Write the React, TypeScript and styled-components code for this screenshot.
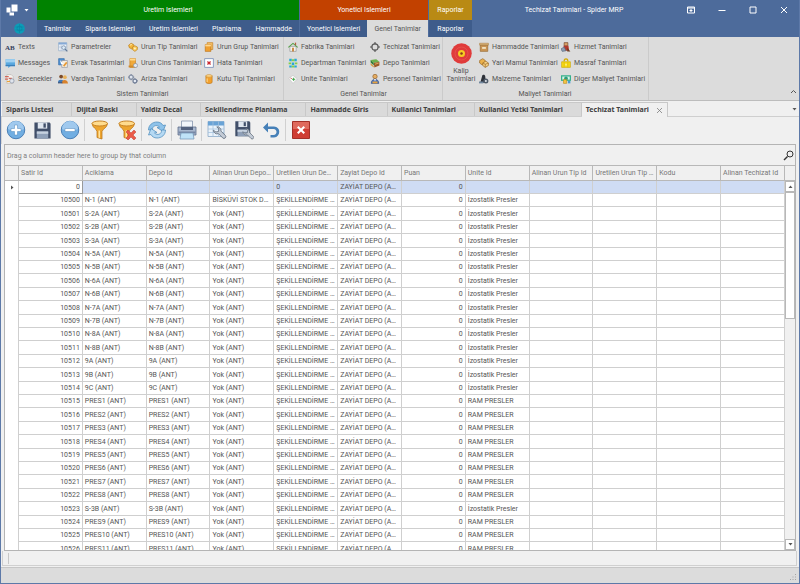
import React from "react";
import styled, { createGlobalStyle, css } from "styled-components";

const GlobalStyle = createGlobalStyle`
  html, body, #root { height: 100%; }
  body { margin: 0; overflow: hidden; }
  *, *::before, *::after { box-sizing: border-box; }
  body, button, input, table { font-family: Roboto, "Liberation Sans", sans-serif; font-size: 7px; line-height: 10px; color: #555; }
  button { border: 0; background: none; padding: 0; margin: 0; cursor: pointer; }
  svg { display: block; flex: none; }
`;

/* ---------- Window frame ---------- */
const Window = styled.div`
  height: 100vh;
  display: flex;
  flex-direction: column;
  background: #f0f0f0;
  border: 1px solid #5d79a8;
  border-top: 0;
`;
const TitleBar = styled.header`
  display: flex;
  height: 37px;
  flex: none;
  background: #4d6b9b;
  color: #fff;
`;
const AppCorner = styled.div`
  width: 36px;
  display: flex;
  flex-direction: column;
`;
const QuickAccess = styled.div`
  height: 20px;
  display: flex;
  align-items: center;
  gap: 6px;
  padding-left: 5px;
`;
const AppButton = styled.button`
  height: 17px;
  display: flex;
  align-items: center;
  justify-content: center;
`;
const Context = styled.div<{ $w: number }>`
  width: ${(p) => p.$w}px;
  flex: none;
  display: flex;
  flex-direction: column;
  margin-right: 1px;
`;
const ContextTitle = styled.div<{ $color: string }>`
  height: 20px;
  line-height: 20px;
  text-align: center;
  background: ${(p) => p.$color};
`;
const ContextTabs = styled.nav`
  display: flex;
  height: 17px;
  background: #3e5c8b;
`;
const RibbonTab = styled.button<{ $active?: boolean }>`
  flex: 1 0 auto;
  padding: 0 6px;
  color: ${(p) => (p.$active ? "#555" : "#fff")};
  background: ${(p) => (p.$active ? "#dcdcdc" : "transparent")};
`;
const WindowTitle = styled.div`
  flex: 1;
  height: 20px;
  line-height: 20px;
  text-align: center;
  white-space: nowrap;
`;
const WindowButton = styled.button`
  width: 31px;
  height: 20px;
  display: flex;
  align-items: center;
  justify-content: center;
`;

/* ---------- Ribbon ---------- */
const Ribbon = styled.section`
  display: flex;
  flex: none;
  height: 64px;
  background: #dcdcdc;
  border-bottom: 1px solid #bdbdbd;
`;
const Group = styled.div<{ $left?: number }>`
  display: flex;
  flex-direction: column;
  padding: 2px 3px 0 ${(p) => p.$left ?? 4}px;
  border-right: 1px solid #cbcbcb;
`;
const GroupBody = styled.div`
  display: flex;
`;
const Commands = styled.div<{ $cols: string }>`
  display: grid;
  grid-template-columns: ${(p) => p.$cols};
  grid-template-rows: repeat(3, 16px);
  grid-auto-flow: column;
`;
const Command = styled.button`
  display: flex;
  align-items: center;
  gap: 3px;
  white-space: nowrap;
  text-align: left;
`;
const BigCommand = styled.button`
  width: 32px;
  margin-right: 2px;
  display: flex;
  flex-direction: column;
  align-items: center;
  padding-top: 4px;
  line-height: 8px;
  gap: 3px;
`;
const Caption = styled.div`
  text-align: center;
  line-height: 14px;
`;
const RibbonEnd = styled.div`
  flex: 1;
  display: flex;
  align-items: flex-end;
  justify-content: flex-end;
  padding: 0 2px 5px 0;
`;

/* ---------- Document tabs ---------- */
const DocTabs = styled.nav`
  display: flex;
  flex: none;
  height: 16px;
  padding: 1px 0 0 1px;
  align-items: stretch;
  border-bottom: 1px solid #cfcfcf;
`;
const DocTab = styled.button<{ $active?: boolean }>`
  flex: none;
  display: flex;
  align-items: center;
  gap: 7px;
  padding: 0 18px 0 4px;
  font-family: "Noto Sans", "Open Sans", sans-serif;
  font-weight: 700;
  color: #404040;
  background: #dadada;
  border: 1px solid #c8c8c8;
  border-width: 1px 1px 0 0;
  ${(p) => p.$active && css`
    background: #f0f0f0;
    padding-right: 4px;
    margin-bottom: -1px;
  `}
`;
const TabListButton = styled.button`
  margin-left: auto;
  width: 10px;
  display: flex;
  align-items: center;
  justify-content: center;
`;

/* ---------- Toolbar ---------- */
const Toolbar = styled.div`
  display: flex;
  flex: none;
  align-items: center;
  height: 27px;
  margin-right: 2px;
  padding-bottom: 1px;
  border-left: 1px solid #d6d6d6;
`;
const ToolButton = styled.button`
  width: 27px;
  height: 24px;
  display: flex;
  align-items: center;
  justify-content: center;
`;
const ToolSeparator = styled.span`
  width: 1px;
  height: 22px;
  margin: 0 1px;
  background: #d0d0d0;
`;

/* ---------- Data grid ---------- */
const GridFrame = styled.main`
  flex: 1;
  min-height: 0;
  margin: 0 3px;
  display: flex;
  flex-direction: column;
  border: 1px solid #b4b4b4;
`;
const GroupPanel = styled.div`
  height: 20px;
  flex: none;
  display: flex;
  align-items: center;
  justify-content: space-between;
  padding: 1px 1px 0 2px;
  color: #808080;
`;
const GridView = styled.div`
  flex: 1;
  min-height: 0;
  display: flex;
`;
const TableClip = styled.div`
  flex: 1;
  min-width: 0;
  overflow: hidden;
  background: #fff;
`;
const Table = styled.table`
  width: 100%;
  table-layout: fixed;
  border-collapse: separate;
  border-spacing: 0;
  line-height: 12px;
`;
const IndicatorCol = styled.col`
  width: 14px;
`;
const HeadCell = styled.th`
  height: 16px;
  padding: 0 2px;
  font-weight: 400;
  text-align: left;
  color: #777;
  background: #f0f0f0;
  border: 1px solid #b8b8b8;
  border-width: 1px 1px 1px 0;
  overflow: hidden;
  white-space: nowrap;
  text-overflow: ellipsis;
`;
const Cell = styled.td<{ $right?: boolean }>`
  padding: 0 2px;
  text-align: ${(p) => (p.$right ? "right" : "left")};
  border: 1px solid #cfcfcf;
  border-width: 0 1px 1px 0;
  overflow: hidden;
  white-space: nowrap;
  text-overflow: ellipsis;
`;
const Row = styled.tr<{ $selected?: boolean }>`
  height: 13px;
  background: ${(p) => (p.$selected ? "#cfdcf4" : "#fff")};
  &:nth-child(5n + 3), &:nth-child(5n) { height: 14px; }
`;
const EditCell = styled(Cell)`
  background: #fff;
  border-color: #999;
`;
const CellInput = styled.input`
  display: block;
  width: 100%;
  height: 12px;
  padding: 0;
  border: 0;
  outline: 0;
  background: transparent;
  text-align: right;
`;
const Indicator = styled.td`
  padding: 0 0 0 5px;
  background: #fff;
  border-right: 1px solid #cfcfcf;
`;
const ScrollColumn = styled.div`
  width: 10px;
  flex: none;
  display: flex;
  flex-direction: column;
  background: #f0f0f0;
`;
const ScrollHead = styled.div`
  height: 16px;
  border: 1px solid #b8b8b8;
  border-width: 1px 0;
`;
const ScrollButton = styled.button`
  height: 11px;
  display: flex;
  align-items: center;
  justify-content: center;
  background: #fff;
  border: 1px solid #b8b8b8;
`;
const ScrollThumb = styled.div`
  flex: 0 0 33%;
  background: #fff;
  border: 1px solid #b8b8b8;
`;
const Spacer = styled.div`
  flex: 1;
`;

/* ---------- Bottom bars ---------- */
const BottomPanel = styled.div`
  flex: none;
  height: 15px;
  margin: 0 2px 0 1px;
  padding: 2px 5px;
  border: 1px solid #d0d0d0;
  border-top: 0;
`;
const BottomMark = styled.div`
  width: 1px;
  height: 11px;
  background: #c8c8c8;
`;
const StatusBar = styled.footer`
  flex: none;
  height: 16px;
  margin-top: 1px;
  display: flex;
  align-items: flex-end;
  justify-content: flex-end;
  padding: 0 2px 2px;
  background: #dcdcdc;
  border-top: 1px solid #c6c6c6;
`;

/* ---------- Icons ---------- */
const S = ({ children, size = 10, box = 16 }: { children: React.ReactNode; size?: number; box?: number }) => (
  <svg width={size} height={size} viewBox={`0 0 ${box} ${box}`} fill="none" aria-hidden="true">
    {children}
  </svg>
);
const Caret = ({ color = "#555", up = false }: { color?: string; up?: boolean }) => (
  <svg width="5" height="3" viewBox="0 0 10 6" aria-hidden="true">
    <path d={up ? "M1 6L5 1L9 6Z" : "M1 0L5 5L9 0Z"} fill={color} />
  </svg>
);
const AbIcon = () => (
  <svg width="10" height="10" viewBox="0 0 10 10" aria-hidden="true">
    <text x="0" y="8" fontFamily="Liberation Serif, serif" fontWeight="700" fontSize="7" fill="#34405c">AB</text>
  </svg>
);
const Wrench = ({ x = 0, y = 0, s = 1 }: { x?: number; y?: number; s?: number }) => (
  <g transform={`translate(${x} ${y}) scale(${s})`}>
    <path d="M1 5a4.500 4.500 0 0 0 6 4l5 5a2 2 0 0 0 3-3l-5-5a4.500 4.500 0 0 0-5-5l2.500 2.500-.5 3-3 .5z" fill="#c3cbd6" stroke="#66717f" strokeWidth="1" />
  </g>
);
const icons = {
  messages: <S><path d="M1 2h15v11H9l-4 3v-3H1z" fill="#5aa9e0" /><path d="M1 2h15v5H1z" fill="#9fd0f2" /><path d="M1 11h15v2H1z" fill="#3b7fb9" /></S>,
  options: <S><path d="M3 1h7l3 3v11H3z" fill="#f7f3f0" stroke="#b9b3b0" /><path d="M0 4h6M0 8h5M6 7h5" stroke="#d3685a" strokeWidth="2" /><circle cx="11" cy="11" r="3.5" fill="#dfe4ec" stroke="#7f8ca0" /><path d="M3 12h5" stroke="#e9a23a" strokeWidth="2" /></S>,
  params: <S><path d="M1 1h13v13H1z" fill="#eef3fa" stroke="#8fa6c4" /><path d="M1 1h13v3H1z" fill="#85a9d6" /><path d="M1 8h13M5 4v10" stroke="#a9bcd4" /><circle cx="9" cy="9" r="3" fill="#dcebf8" stroke="#5f7796" /><path d="M11 11l4 4" stroke="#5f7796" strokeWidth="2" /></S>,
  doc: <S><path d="M1 1h9v10H1z" fill="#4f8fd0" stroke="#2f6aa8" /><path d="M6 4h9v11H6z" fill="#f5eee0" stroke="#8a8f9a" /><path d="M3 3l6 6-4 1z" fill="#fff" /><path d="M8 12l5-6 2 2-5 6z" fill="#e79a35" /></S>,
  shift: <S><circle cx="5" cy="4" r="3" fill="#7b4b2a" /><path d="M0 13c0-5 9-5 10 0z" fill="#3f79b8" /><circle cx="11" cy="5" r="3" fill="#e9b25c" /><path d="M6 15c0-7 9-7 10 0z" fill="#d9822b" /><path d="M0 13h7v2H0z" fill="#344f78" /></S>,
  coins: <S><path d="M1 5l4-3 4 2 1 4-4 3-4-2z" fill="#f3b73c" stroke="#b87a18" /><path d="M7 8l4-2 4 2v4l-4 3-4-3z" fill="#f8c95a" stroke="#b87a18" /><path d="M3 5l3-1" stroke="#fff1c0" strokeWidth="1.5" /><circle cx="11" cy="10.500" r="1.600" fill="#fff1c0" /></S>,
  kind: <S><path d="M3 1h9v14H3z" fill="#f0a93a" stroke="#c47c1d" /><path d="M3 1h9v3H3z" fill="#ffd98c" /><circle cx="12" cy="12" r="3.300" fill="#e3e8ef" stroke="#7d8798" /><path d="M1 12h7v3H1z" fill="#d08a2a" /></S>,
  gears: <S><circle cx="5" cy="5" r="3.200" stroke="#8b96a8" strokeWidth="2" fill="#dfe5ee" /><circle cx="11" cy="11" r="3" stroke="#75829a" strokeWidth="2" fill="#e6ebf4" /><path d="M5 0v2M5 8v2M0 5h2M8 5h2M11 6.500v2M11 14v2M14 11h2" stroke="#75829a" strokeWidth="1.500" /></S>,
  group: <S><path d="M5 1h9v11H5z" fill="#f6c066" stroke="#c47c1d" /><path d="M2 4h9v11H2z" fill="#f0a030" stroke="#b96f14" /><path d="M2 4h9v3H2z" fill="#ffd890" /></S>,
  error: <S><path d="M1 1h14v14H1z" fill="#fff" stroke="#8499bd" strokeWidth="1.500" /><path d="M5.500 5.500l5 5M10.500 5.500l-5 5" stroke="#c9252d" strokeWidth="2" /></S>,
  can: <S><path d="M3 3v10c0 3 10 3 10 0V3z" fill="#f2a02c" stroke="#b9731a" /><ellipse cx="8" cy="3" rx="5" ry="2" fill="#ffd98c" stroke="#c98b30" /><path d="M5 7v6" stroke="#ffdf9c" strokeWidth="1.500" /></S>,
  house: <S><path d="M3 7h10v8H3z" fill="#f4f1ea" stroke="#8b8f94" /><path d="M0 8l8-7 8 7-1 1-7-6-7 6z" fill="#54a046" /><path d="M11 1h2v4h-2z" fill="#b55c3d" /><path d="M6.500 9h3v6h-3z" fill="#c78540" /></S>,
  dept: <S><path d="M2 1h4v4H2zM10 1h4v4h-4zM6 7h4v4H6zM2 12h4v3H2zM10 12h4v3h-4z" fill="#25a9d8" /><path d="M6 2h4v3H6zM1 7h4v3H1zM11 7h4v3h-4zM6 12h4v3H6z" fill="#83cf4a" /></S>,
  unit: <S><path d="M1 7l7-5 7 6-7 7z" fill="#fafafa" stroke="#c2c2c2" /><path d="M9 6v5M6.500 8.500h5" stroke="#3da345" strokeWidth="1.500" /><path d="M4 6l2 2" stroke="#c64a43" strokeWidth="1.500" /></S>,
  target: <S><circle cx="8" cy="8" r="5" stroke="#555" strokeWidth="1.800" /><path d="M8 0v4M8 12v4M0 8h4M12 8h4" stroke="#555" strokeWidth="1.800" /></S>,
  depot: <S><path d="M1 3l9-1 5 4-9 2z" fill="#6bb14a" /><path d="M1 3l5 5v4L1 7z" fill="#2f7b35" /><path d="M6 8l9-2v6l-8 3z" fill="#9a5a28" /><path d="M1 8l5 5v2l-5-4z" fill="#d69a38" /><path d="M8 10l6-2" stroke="#e4b05d" strokeWidth="1.500" /></S>,
  person: <S><circle cx="8" cy="4" r="3.500" fill="#e5ad62" stroke="#8a5a24" /><path d="M2 15c0-9 12-9 12 0z" fill="#4f74b8" stroke="#2c4a80" /><path d="M4 12h8v3H4z" fill="#e7a23c" /><path d="M6.500 8h3l-1.500 4z" fill="#fff" /></S>,
  crate: <S><path d="M1 2h14v3H1z" fill="#e8c38a" stroke="#a87d43" /><path d="M2 5h12v10H2z" fill="#c99555" stroke="#93672f" /><path d="M5 8h6v3H5z" fill="#f2e2c2" /></S>,
  semi: <S><path d="M1 4l5-3 4 3v5L5 11 1 8z" fill="#eab04a" stroke="#94611c" /><path d="M6 8l5-3 4 3v4l-5 3-4-3z" fill="#f6d083" stroke="#94611c" /><path d="M6 8l4 2 5-2M10 10v5" stroke="#94611c" /></S>,
  material: <S><path d="M2 14L5 3c1-3 5-2 5 1l1 10z" fill="#2d3138" /><circle cx="11" cy="11" r="4" fill="#4f5a68" /><circle cx="11" cy="11" r="1.600" fill="#e1e6ec" /><path d="M0 12h7v3H0z" fill="#71879e" /></S>,
  service: <S><path d="M5 1h6v5H5z" fill="#d9a066" stroke="#6b3c22" /><path d="M4 6h8l1 8H5z" fill="#b3372c" /><path d="M0 11l5-3 3 6-6 1z" fill="#8f9fb4" stroke="#59677a" /><path d="M10 9l5 6h-5z" fill="#6b3c22" /></S>,
  bag: <S><path d="M5 5c0-5 6-5 6 0" stroke="#d4aa00" strokeWidth="2" /><path d="M1 6h14v9H1z" fill="#f9d915" stroke="#c8a500" /><path d="M5 6v9M11 6v9" stroke="#d9b800" /><path d="M7 9h2v3H7z" fill="#fff7b0" /></S>,
  money: <S><path d="M0 2h16v9H0z" fill="#35b08b" /><path d="M2 4h12v5H2z" fill="#d9f3e7" /><circle cx="8" cy="7" r="3" fill="#2c9e7c" /><path d="M4 9h5v6H4z" fill="#f3c542" stroke="#bf8c1d" /><path d="M11 11h4v4h-4z" fill="#4a9bd4" /></S>,
};
const Disc = () => (
  <svg width="21" height="21" viewBox="0 0 42 42" aria-hidden="true">
    <circle cx="21" cy="21" r="20.500" fill="#e03b3b" />
    <circle cx="21" cy="21" r="13" fill="none" stroke="#e6504b" strokeWidth="2" />
    <circle cx="21" cy="21" r="7" fill="#f5cf23" />
    <circle cx="21" cy="21" r="2.500" fill="#8b3a1c" />
  </svg>
);

const Ball = ({ minus = false }: { minus?: boolean }) => (
  <S size={20} box={40}>
    <circle cx="20" cy="20" r="17.500" fill="#71aee2" stroke="#4a7fb5" strokeWidth="2" />
    <path d="M4 18a16 16 0 0 1 32 0c-9 4-23 4-32 0z" fill="#a0c9ee" />
    <path d={minus ? "M10 17h20v6H10z" : "M17 10h6v7h7v6h-7v7h-6v-7h-7v-6h7z"} fill="#fff" stroke="#4f86bb" strokeWidth="1" />
  </S>
);
const floppy = (
  <>
    <path d="M3 3h32l2 3v31H3z" fill="#414f69" />
    <path d="M10 3h20v13H10z" fill="#dfe6ef" />
    <path d="M22 5h5v9h-5z" fill="#414f69" />
    <path d="M8 22h24v15H8z" fill="#8fa0b8" />
    <path d="M8 22h24v5H8z" fill="#c6d1df" />
  </>
);
const funnel = (
  <>
    <path d="M4 7c1 9 9 10 10 16v12l10 3V23c2-6 10-7 11-16z" fill="#eda52f" stroke="#b8741a" strokeWidth="1.500" />
    <path d="M17 21v14l3 1V21z" fill="#ffe3a0" />
    <ellipse cx="19.500" cy="7" rx="15.500" ry="5" fill="#ffdc8e" stroke="#c98526" strokeWidth="2" />
  </>
);
const tools: Array<{ label: string; icon: React.ReactNode } | null> = [
  { label: "Yeni", icon: <Ball /> },
  { label: "Kaydet", icon: <S size={19} box={40}>{floppy}</S> },
  { label: "Sil", icon: <Ball minus /> },
  null,
  { label: "Filtrele", icon: <S size={20} box={40}>{funnel}</S> },
  { label: "Filtreyi kaldir", icon: <S size={20} box={40}>{funnel}<path d="M18 24l4-4 6 6 6-6 4 4-6 6 6 6-4 4-6-6-6 6-4-4 6-6z" fill="#ea5a48" stroke="#c2392b" /></S> },
  null,
  {
    label: "Yenile",
    icon: (
      <S size={20} box={40}>
        <path d="M3 20C3 10 11 4 20 4c6 0 10 3 12 7l5-1-5 13-12-8 5-1c-6-6-15-2-14 6z" fill="#8fc3ea" stroke="#4f8dbd" strokeWidth="1.500" />
        <path d="M37 20c0 10-8 16-17 16-6 0-10-3-12-7l-5 1 5-13 12 8-5 1c6 6 15 2 14-6z" fill="#b5d9f3" stroke="#4f8dbd" strokeWidth="1.500" />
      </S>
    ),
  },
  null,
  {
    label: "Yazdir",
    icon: (
      <S size={20} box={40}>
        <path d="M9 2h22v14H9z" fill="#f1f5fa" stroke="#7f8fa8" strokeWidth="1.500" />
        <path d="M2 14h36v16H2z" fill="#a8b7ce" stroke="#5a6a86" strokeWidth="1.500" />
        <path d="M8 14h24v6H8z" fill="#53627f" />
        <path d="M3 23h34v4H3z" fill="#7686a4" />
        <path d="M8 26h24l2 12H6z" fill="#bfe2f7" stroke="#7695b5" strokeWidth="1.500" />
      </S>
    ),
  },
  null,
  {
    label: "Tablo ayarlari",
    icon: (
      <S size={20} box={40}>
        <path d="M2 3h32v30H2z" fill="#eaf3fb" stroke="#86a5c6" strokeWidth="1.500" />
        <path d="M2 3h32v8H2z" fill="#69a3d6" />
        <path d="M2 18h32M2 25h32M12 3v30M23 3v30" stroke="#a3c0dc" strokeWidth="1.500" />
        <Wrench x={11} y={12} s={1.7} />
      </S>
    ),
  },
  { label: "Duzeni kaydet", icon: <S size={20} box={40}><g transform="scale(.88)">{floppy}</g><Wrench x={16} y={16} s={1.5} /></S> },
  { label: "Geri al", icon: <S size={20} box={40}><path d="M14 5L4 15l10 10v-7h11c8 0 8 12 0 12h-6v5h7c14-1 14-22 0-22H14z" fill="#4680b8" /></S> },
  null,
  {
    label: "Kapat",
    icon: (
      <S size={18} box={36}>
        <path d="M1 1h34v34H1z" fill="#cf3d33" stroke="#a33028" strokeWidth="2" />
        <path d="M2 2h32v14H2z" fill="#df6a5d" />
        <path d="M10 13l3-3 5 5 5-5 3 3-5 5 5 5-3 3-5-5-5 5-3-3 5-5z" fill="#fff" />
      </S>
    ),
  },
];

/* ---------- Data ---------- */
type Item = [string, React.ReactNode];
const systemItems: Item[] = [
  ["Texts", <AbIcon />], ["Messages", icons.messages], ["Secenekler", icons.options],
  ["Parametreler", icons.params], ["Evrak Tasarimlari", icons.doc], ["Vardiya Tanimlari", icons.shift],
  ["Urun Tip Tanimlari", icons.coins], ["Urun Cins Tanimlari", icons.kind], ["Ariza Tanimlari", icons.gears],
  ["Urun Grup Tanimlari", icons.group], ["Hata Tanimlari", icons.error], ["Kutu Tipi Tanimlari", icons.can],
];
const generalItems: Item[] = [
  ["Fabrika Tanimlari", icons.house], ["Departman Tanimlari", icons.dept], ["Unite Tanimlari", icons.unit],
  ["Techizat Tanimlari", icons.target], ["Depo Tanimlari", icons.depot], ["Personel Tanimlari", icons.person],
];
const costItems: Item[] = [
  ["Hammadde Tanimlari", icons.crate], ["Yari Mamul Tanimlari", icons.semi], ["Malzeme Tanimlari", icons.material],
  ["Hizmet Tanimlari", icons.service], ["Masraf Tanimlari", icons.bag], ["Diger Maliyet Tanimlari", icons.money],
];
const docTabs = ["Siparis Listesi", "Dijital Baski", "Yaldiz Decal", "Sekillendirme Planlama", "Hammadde Giris", "Kullanici Tanimlari", "Kullanici Yetki Tanimlari"];
const columns = ["Satir Id", "Aciklama", "Depo Id", "Alinan Urun Depo Id", "Uretilen Urun Depo Id", "Zayiat Depo Id", "Puan", "Unite Id", "Alinan Urun Tip Id", "Uretilen Urun Tip Id", "Kodu", "Alinan Techizat Id"];
const names = ["N-1", "S-2A", "S-2B", "S-3A", "N-5A", "N-5B", "N-6A", "N-6B", "N-7A", "N-7B", "N-8A", "N-8B", "9A", "9B", "9C", "PRES1", "PRES2", "PRES3", "PRES4", "PRES5", "PRES6", "PRES7", "PRES8", "S-3B", "PRES9", "PRES10", "PRES11"];
const rows = names.map((name, i) => [
  String(10500 + i),
  `${name} (ANT)`,
  `${name} (ANT)`,
  i === 0 ? "BİSKÜVİ STOK DEPO" : "Yok (ANT)",
  "ŞEKİLLENDİRME DEPO",
  "ZAYİAT DEPO (ANT)",
  "0",
  name.startsWith("PRES") ? "RAM PRESLER" : "İzostatik Presler",
  "", "", "", "",
]);
const isNumeric = (col: number) => col === 0 || col === 6;

const CommandList = ({ items, cols }: { items: Item[]; cols: string }) => (
  <Commands $cols={cols}>
    {items.map(([label, icon]) => (
      <Command key={label}>{icon}{label}</Command>
    ))}
  </Commands>
);

export default function App() {
  return (
    <>
      <GlobalStyle />
      <Window>
        <TitleBar>
          <AppCorner>
            <QuickAccess>
              <S size={12} box={24}>
                <path d="M11 1h12v14H11z" fill="#fff" />
                <path d="M1 7h8v10H1z" fill="#fff" />
                <path d="M7 17h9v6H7z" fill="#fff" />
              </S>
              <Caret color="#fff" />
            </QuickAccess>
            <AppButton aria-label="Uygulama menusu">
              <S size={11} box={22}>
                <circle cx="11" cy="11" r="10.500" fill="#0b9db8" />
                <path d="M3 8h16M3 14h16M11 2v18" stroke="#0b7f9e" strokeWidth="1" />
                <circle cx="11" cy="11" r="5" stroke="#0b7f9e" strokeWidth="1" />
              </S>
            </AppButton>
          </AppCorner>
          <Context $w={262}>
            <ContextTitle $color="#008200">Uretim Islemleri</ContextTitle>
            <ContextTabs>
              {["Tanimlar", "Siparis Islemleri", "Uretim Islemleri", "Planlama", "Hammadde"].map((t) => (
                <RibbonTab key={t}>{t}</RibbonTab>
              ))}
            </ContextTabs>
          </Context>
          <Context $w={128}>
            <ContextTitle $color="#c24100">Yonetici Islemleri</ContextTitle>
            <ContextTabs>
              <RibbonTab>Yonetici Islemleri</RibbonTab>
              <RibbonTab $active>Genel Tanimlar</RibbonTab>
            </ContextTabs>
          </Context>
          <Context $w={43}>
            <ContextTitle $color="#b98a14">Raporlar</ContextTitle>
            <ContextTabs>
              <RibbonTab>Raporlar</RibbonTab>
            </ContextTabs>
          </Context>
          <WindowTitle>Techizat Tanimlari - Spider MRP</WindowTitle>
          <WindowButton aria-label="Serit gorunumu">
            <S size={8}><path d="M1 2h14v12H1z" stroke="#fff" strokeWidth="2" /><path d="M1 4h14M8 6v6M5 9h6" stroke="#fff" strokeWidth="2" /></S>
          </WindowButton>
          <WindowButton aria-label="Simge durumuna kucult">
            <S size={8}><path d="M1 9h14" stroke="#fff" strokeWidth="2" /></S>
          </WindowButton>
          <WindowButton aria-label="Ekrani kapla">
            <S size={8}><path d="M2 2h12v12H2z" stroke="#fff" strokeWidth="2" /></S>
          </WindowButton>
          <WindowButton aria-label="Pencereyi kapat">
            <S size={8}><path d="M2 2l12 12M14 2L2 14" stroke="#fff" strokeWidth="2" /></S>
          </WindowButton>
        </TitleBar>

        <Ribbon>
          <Group>
            <GroupBody>
              <CommandList items={systemItems} cols="53px 70px 76px 76px" />
            </GroupBody>
            <Caption>Sistem Tanimlari</Caption>
          </Group>
          <Group>
            <GroupBody>
              <CommandList items={generalItems} cols="82px 69px" />
            </GroupBody>
            <Caption>Genel Tanimlar</Caption>
          </Group>
          <Group $left={2}>
            <GroupBody>
              <BigCommand><Disc /><span>Kalip Tanimlari</span></BigCommand>
              <CommandList items={costItems} cols="82px 84px" />
            </GroupBody>
            <Caption>Maliyet Tanimlari</Caption>
          </Group>
          <RibbonEnd>
            <button aria-label="Seridi daralt">
              <S size={7} box={14}><path d="M2 10l5-5 5 5" stroke="#555" strokeWidth="2" /></S>
            </button>
          </RibbonEnd>
        </Ribbon>

        <DocTabs>
          {docTabs.map((t) => <DocTab key={t}>{t}</DocTab>)}
          <DocTab $active>
            Techizat Tanimlari
            <S size={7} box={14}><path d="M2 2l10 10M12 2L2 12" stroke="#777" strokeWidth="1.500" /></S>
          </DocTab>
          <TabListButton aria-label="Acik sekmeler"><Caret /></TabListButton>
        </DocTabs>

        <Toolbar role="toolbar">
          {tools.map((t, i) =>
            t ? <ToolButton key={i} aria-label={t.label}>{t.icon}</ToolButton> : <ToolSeparator key={i} />
          )}
        </Toolbar>

        <GridFrame>
          <GroupPanel>
            Drag a column header here to group by that column
            <button aria-label="Ara">
              <S size={11} box={22}><circle cx="14" cy="8" r="6" stroke="#333" strokeWidth="2" /><path d="M9 13l-7 7" stroke="#333" strokeWidth="3" /></S>
            </button>
          </GroupPanel>
          <GridView>
            <TableClip>
              <Table>
                <colgroup>
                  <IndicatorCol />
                  {columns.map((c) => <col key={c} />)}
                </colgroup>
                <thead>
                  <tr>
                    <HeadCell aria-label="Satir isareti" />
                    {columns.map((c) => <HeadCell key={c} scope="col">{c}</HeadCell>)}
                  </tr>
                </thead>
                <tbody>
                  <Row $selected>
                    <Indicator><S size={5} box={10}><path d="M2 1l5 4-5 4z" fill="#555" /></S></Indicator>
                    <EditCell><CellInput aria-label="Satir Id" defaultValue="0" /></EditCell>
                    {["", "", "", "0", "ZAYİAT DEPO (ANT)", "0", "", "", "", "", ""].map((v, i) => (
                      <Cell key={i} $right={i === 5}>{v}</Cell>
                    ))}
                  </Row>
                  {rows.map((r) => (
                    <Row key={r[0]}>
                      <Indicator />
                      {r.map((v, i) => <Cell key={i} $right={isNumeric(i)}>{v}</Cell>)}
                    </Row>
                  ))}
                </tbody>
              </Table>
            </TableClip>
            <ScrollColumn>
              <ScrollHead />
              <ScrollButton aria-label="Yukari kaydir"><Caret up /></ScrollButton>
              <ScrollThumb />
              <Spacer />
              <ScrollButton aria-label="Asagi kaydir"><Caret /></ScrollButton>
            </ScrollColumn>
          </GridView>
        </GridFrame>

        <BottomPanel><BottomMark /></BottomPanel>
        <StatusBar>
          <S size={7} box={14}><path d="M10 0h2v2h-2zM10 5h2v2h-2zM5 5h2v2H5zM10 10h2v2h-2zM5 10h2v2H5zM0 10h2v2H0z" fill="#a5a5a5" /></S>
        </StatusBar>
      </Window>
    </>
  );
}
